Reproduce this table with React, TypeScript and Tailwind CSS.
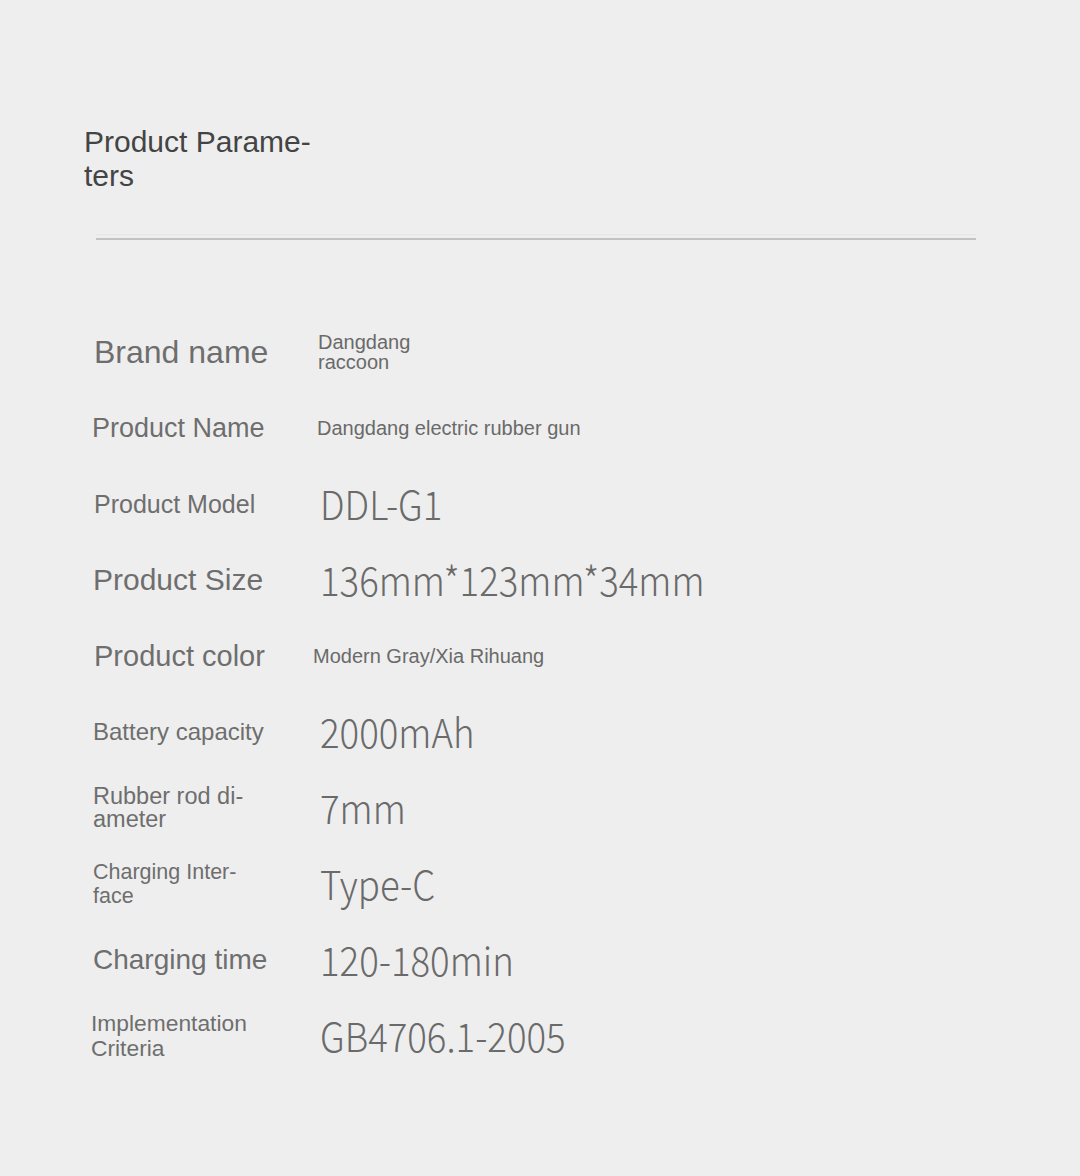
import React from "react";

type Row = {
  label: React.ReactNode;
  labelCls: string;
  value: React.ReactNode;
  valueCls: string;
};

const sans = "font-['Liberation_Sans',Arial,sans-serif]";
const big = "font-['Noto_Sans_CJK_SC','Noto_Sans',sans-serif] ml-[2px] text-[40px] leading-[48px] font-light scale-x-[0.915] origin-left -mt-[3px]";

const rows: Row[] = [
  {
    label: "Brand name",
    labelCls: "pl-[3px] text-[32px] leading-[36px]",
    value: (
      <>
        Dangdang
        <br />
        raccoon
      </>
    ),
    valueCls: `${sans} text-[20px] leading-[20px] -mt-[1px]`,
  },
  {
    label: "Product Name",
    labelCls: "pl-[1px] text-[27px] leading-[32px]",
    value: "Dangdang electric rubber gun",
    valueCls: `${sans} -ml-[1px] text-[20px] leading-[24px]`,
  },
  {
    label: "Product Model",
    labelCls: "pl-[3px] text-[25px] leading-[30px]",
    value: "DDL-G1",
    valueCls: big,
  },
  {
    label: "Product Size",
    labelCls: "pl-[2px] text-[30px] leading-[34px]",
    value: "136mm*123mm*34mm",
    valueCls: big,
  },
  {
    label: "Product color",
    labelCls: "pl-[3px] text-[29px] leading-[34px]",
    value: "Modern Gray/Xia Rihuang",
    valueCls: `${sans} -ml-[5px] text-[20px] leading-[24px]`,
  },
  {
    label: "Battery capacity",
    labelCls: "pl-[2px] text-[24px] leading-[28px]",
    value: "2000mAh",
    valueCls: big,
  },
  {
    label: (
      <>
        Rubber rod di-
        <br />
        ameter
      </>
    ),
    labelCls: "pl-[2px] text-[23.5px] leading-[23px]",
    value: "7mm",
    valueCls: big,
  },
  {
    label: (
      <>
        Charging Inter-
        <br />
        face
      </>
    ),
    labelCls: "pl-[2px] text-[21.5px] leading-[24px]",
    value: "Type-C",
    valueCls: big,
  },
  {
    label: "Charging time",
    labelCls: "pl-[2px] text-[28px] leading-[32px]",
    value: "120-180min",
    valueCls: big,
  },
  {
    label: (
      <>
        Implementation
        <br />
        Criteria
      </>
    ),
    labelCls: "text-[22.8px] leading-[25px]",
    value: "GB4706.1-2005",
    valueCls: big,
  },
];

export default function App() {
  return (
    <div className={`w-[1080px] min-h-[1176px] bg-[#eeeeee] ${sans}`}>
      <div className="pt-[125px] pl-[84px]">
        <h1 className="text-[30px] leading-[34px] text-[#444444] font-normal">
          Product Parame-
          <br />
          ters
        </h1>
      </div>
      <div className="mt-[41px] ml-[96px] w-[880px] border-t border-[#e6e6e6]">
        <div className="h-[2px] mt-[3px] bg-[#c2c2c2]" />
      </div>
      <div className="mt-[74px] flex flex-col pl-[91px]">
        {rows.map((r, i) => (
          <div key={i} className="h-[76px] flex items-center">
            <div className={`w-[227px] shrink-0 text-[#6e6e6e] whitespace-nowrap ${r.labelCls}`}>
              {r.label}
            </div>
            <div className={`text-[#6a6a6a] whitespace-nowrap ${r.valueCls}`}>
              {r.value}
            </div>
          </div>
        ))}
      </div>
    </div>
  );
}
